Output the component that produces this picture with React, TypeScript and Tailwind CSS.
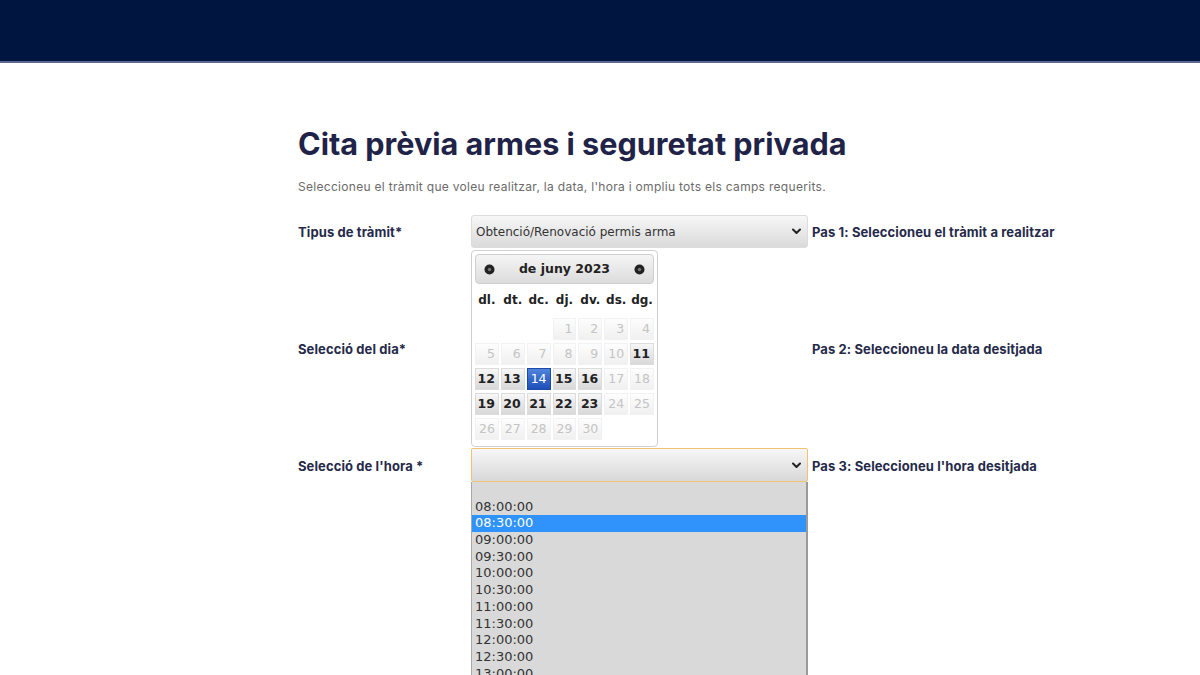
import React from "react";

const sans = { fontFamily: "Inter, 'Noto Sans', sans-serif" };
const verd = { fontFamily: "'DejaVu Sans', Verdana, sans-serif" };

function Chevron() {
  return (
    <svg width="9" height="7" viewBox="0 0 9 7" className="shrink-0">
      <path d="M1 1.5 L4.5 5 L8 1.5" fill="none" stroke="#222" strokeWidth="2" strokeLinecap="round" strokeLinejoin="round" />
    </svg>
  );
}

function CircleIcon() {
  return (
    <svg width="11" height="11" viewBox="0 0 11 11">
      <circle cx="5.5" cy="5.5" r="5" fill="#222" />
      <circle cx="5.5" cy="5.5" r="1.7" fill="#777" />
    </svg>
  );
}

type Day = { n: number | null; kind: "empty" | "off" | "on" | "sel" };

const enabled = new Set([11, 12, 13, 15, 16, 19, 20, 21, 22, 23]);

function buildDays(): Day[] {
  const arr: Day[] = [];
  for (let i = 0; i < 3; i++) arr.push({ n: null, kind: "empty" });
  for (let d = 1; d <= 30; d++) {
    arr.push({ n: d, kind: d === 14 ? "sel" : enabled.has(d) ? "on" : "off" });
  }
  while (arr.length % 7 !== 0) arr.push({ n: null, kind: "empty" });
  return arr;
}

function Cell({ d }: { d: Day }) {
  if (d.kind === "empty") return <div className="h-[22px]" />;
  if (d.kind === "sel")
    return (
      <div className="h-[22px] border border-[#1d4aa8] bg-gradient-to-b from-[#4f84dc] to-[#1f4fb8] text-white text-right pr-[3px] leading-[20px] text-[12.5px]">
        {d.n}
      </div>
    );
  if (d.kind === "on")
    return (
      <div className="h-[22px] border border-[#dcdcdc] bg-gradient-to-b from-[#f7f7f7] to-[#d8d8d8] text-[#222] font-bold text-right pr-[3px] leading-[20px] text-[12.5px]">
        {d.n}
      </div>
    );
  return (
    <div className="h-[22px] border border-[#f2f2f2] bg-gradient-to-b from-[#fdfdfd] to-[#f0f0f0] text-[#c4c4c4] text-right pr-[3px] leading-[20px] text-[12.5px]">
      {d.n}
    </div>
  );
}

const times = ["", "08:00:00", "08:30:00", "09:00:00", "09:30:00", "10:00:00", "10:30:00", "11:00:00", "11:30:00", "12:00:00", "12:30:00", "13:00:00", "13:30:00"];

const label = "w-[173px] text-[13px] font-bold text-[#262a4a] pt-[3px] tracking-[0.1px]";
const note = "ml-[4px] text-[13px] font-bold text-[#262a4a] pt-[3px] tracking-[0.1px]";

export default function App() {
  const days = buildDays();
  const names = ["dl.", "dt.", "dc.", "dj.", "dv.", "ds.", "dg."];
  return (
    <div className="w-[1200px] h-[675px] overflow-hidden bg-white relative">
      <div className="h-[63px] bg-[#001540] border-b-[2px] border-[#5a6890]" />
      <div className="pl-[298px] pt-[62px]" style={sans}>
        <h1 className="text-[30.6px] font-bold text-[#1f2347] leading-[38px] tracking-[0px]">
          Cita prèvia armes i seguretat privada
        </h1>
        <p className="mt-[16px] text-[12px] text-[#6b6b6b] leading-[16px] tracking-[0.3px]">
          Seleccioneu el tràmit que voleu realitzar, la data, l'hora i ompliu tots els camps requerits.
        </p>

        {/* Row 1 */}
        <div className="flex items-center mt-[20px]">
          <div className={label}>Tipus de tràmit*</div>
          <div className="w-[337px] h-[33px] border border-[#dcdcdc] rounded-[3px] bg-gradient-to-b from-[#f7f7f7] to-[#dadada] flex items-center justify-between pl-[4px] pr-[6px]" style={verd}>
            <span className="text-[12px] text-[#333]">Obtenció/Renovació permis arma</span>
            <Chevron />
          </div>
          <div className={note}>Pas 1: Seleccioneu el tràmit a realitzar</div>
        </div>

        {/* Row 2 */}
        <div className="flex items-center mt-[2px]">
          <div className={label}>Selecció del dia*</div>
          <div className="w-[337px]">
            <div className="w-[187px] border border-[#d0d0d0] rounded-[4px] bg-white p-[3px] pb-[6px]" style={verd}>
              <div className="h-[30px] border border-[#cfcfcf] rounded-[4px] bg-gradient-to-b from-[#f5f5f5] to-[#dcdcdc] flex items-center justify-between px-[8px]">
                <CircleIcon />
                <span className="text-[12.5px] font-bold text-[#222]">de juny 2023</span>
                <CircleIcon />
              </div>
              <div className="grid grid-cols-7 gap-x-[2px] mt-[3px] h-[26px] items-center">
                {names.map((n) => (
                  <div key={n} className="text-center text-[12px] font-bold text-[#222]">{n}</div>
                ))}
              </div>
              <div className="grid grid-cols-7 gap-x-[2px] gap-y-[3px] mt-[5px]">
                {days.map((d, i) => (
                  <Cell key={i} d={d} />
                ))}
              </div>
            </div>
          </div>
          <div className={note}>Pas 2: Seleccioneu la data desitjada</div>
        </div>

        {/* Row 3 */}
        <div className="flex items-center mt-[1px]">
          <div className={label}>Selecció de l'hora *</div>
          <div className="w-[337px] relative">
            <div className="h-[34px] border border-[#f0c373] rounded-[2px] bg-gradient-to-b from-[#f7f7f7] to-[#d8d8d8] flex items-center justify-end pr-[6px]">
              <Chevron />
            </div>
            <div className="absolute left-0 top-full w-[337px] h-[260px] bg-[#d9d9d9] border-l border-[#a8a8a8] border-r-[2px] border-r-[#9a9a9a]" style={verd}>
              {times.map((t, i) => (
                <div
                  key={i}
                  className={
                    "h-[16.7px] leading-[16.7px] pl-[3px] text-[13px] " +
                    (t === "08:30:00" ? "bg-[#2f93fb] text-white" : "text-[#333]")
                  }
                >
                  {t}
                </div>
              ))}
            </div>
          </div>
          <div className={note}>Pas 3: Seleccioneu l'hora desitjada</div>
        </div>
      </div>
    </div>
  );
}
